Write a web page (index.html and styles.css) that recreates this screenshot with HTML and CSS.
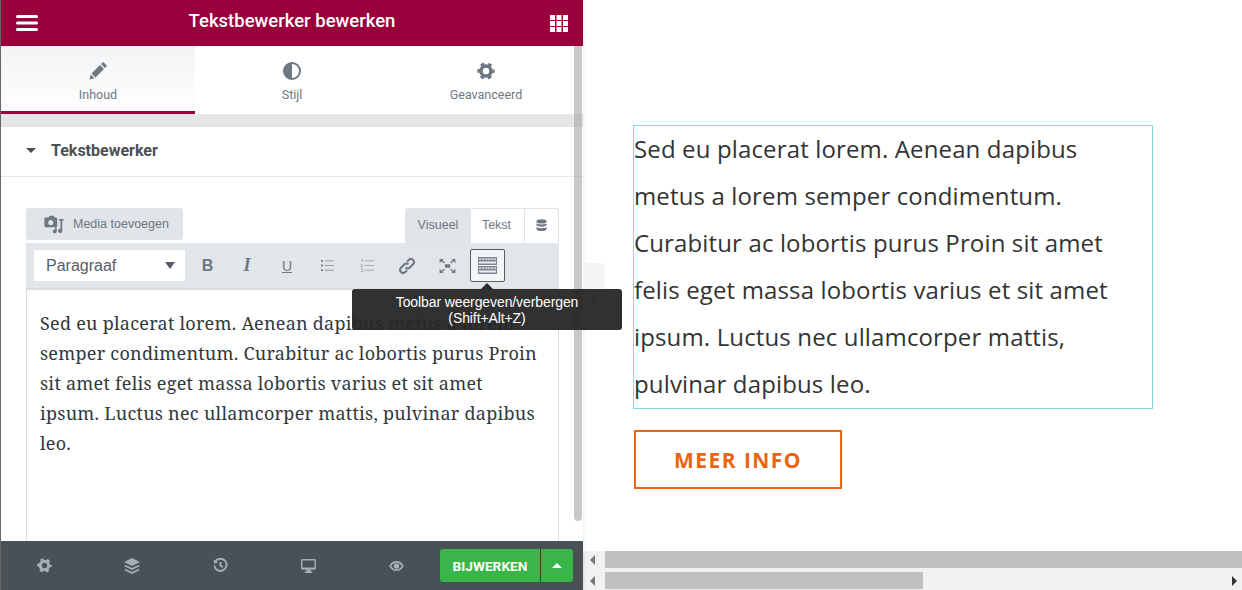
FILE: index.html
```html
<!DOCTYPE html>
<html lang="nl">
<head>
<meta charset="utf-8">
<title>Tekstbewerker bewerken</title>
<link rel="stylesheet" href="styles.css">
</head>
<body>
<div class="app">
  <aside class="panel">
    <header class="head">
      <svg class="head-icon" width="22" height="16" viewBox="0 0 22 16"><path d="M1.500 1.500h19M1.500 8h19M1.500 14.500h19" stroke="#fff" stroke-width="3" stroke-linecap="round"/></svg>
      <h1 class="head-title">Tekstbewerker bewerken</h1>
      <svg class="head-icon" width="18" height="17" viewBox="0 0 18 17" fill="#fff"><rect width="5" height="5"/><rect x="6.500" width="5" height="5"/><rect x="13" width="5" height="5"/><rect y="6" width="5" height="5"/><rect x="6.500" y="6" width="5" height="5"/><rect x="13" y="6" width="5" height="5"/><rect y="12" width="5" height="5"/><rect x="6.500" y="12" width="5" height="5"/><rect x="13" y="12" width="5" height="5"/></svg>
    </header>
    <nav class="tabs">
      <div class="tab tab-active">
        <svg width="18" height="18" viewBox="0 0 18 18" fill="#6d7882"><path d="M13.500 .5a1 1 0 0 1 1.300 0l2.700 2.700a1 1 0 0 1 0 1.300L16 6 12 2zM11 3l4 4-8.500 8.500-4-4zM1.800 12.500l3.700 3.700L.5 17.500z"/></svg>
        <span>Inhoud</span>
      </div>
      <div class="tab">
        <svg width="18" height="18" viewBox="0 0 18 18"><circle cx="9" cy="9" r="8" fill="none" stroke="#6d7882" stroke-width="2"/><path d="M9 1a8 8 0 0 0 0 16z" fill="#6d7882"/></svg>
        <span>Stijl</span>
      </div>
      <div class="tab">
        <svg width="18" height="18" viewBox="0 0 18 18"><circle cx="9" cy="9" r="5" fill="none" stroke="#6d7882" stroke-width="3.600"/><circle cx="9" cy="9" r="7.400" fill="none" stroke="#6d7882" stroke-width="2.600" stroke-dasharray="3.800 3.950" stroke-dashoffset="1.900"/></svg>
        <span>Geavanceerd</span>
      </div>
    </nav>
    <div class="band"></div>
    <div class="section">
      <span class="caret"></span>
      <h2 class="section-title">Tekstbewerker</h2>
    </div>
    <div class="editor-area">
      <div class="editor-top">
        <button class="media-btn">
          <svg width="22" height="22" viewBox="0 0 24 24" fill="#6d7882"><path d="M3 5h3l1.500-2h4L13 5h1a1.500 1.500 0 0 1 1.500 1.500V14a1.500 1.500 0 0 1-1.500 1.500H3A1.500 1.500 0 0 1 1.500 14V6.500A1.500 1.500 0 0 1 3 5zm5.500 2.600a2.800 2.800 0 1 0 0 5.600 2.800 2.800 0 0 0 0-5.600z"/><path d="M17.500 6.500h5v1.800h-1.500v11.200a2.300 2.300 0 1 1-2-2.200V8.300h-1.500zM13 15.800h2v4.200a2.200 2.200 0 1 1-2-2.100z"/></svg>
          <span>Media toevoegen</span>
        </button>
        <div class="modes">
          <span class="mode mode-on">Visueel</span>
          <span class="mode mode-text">Tekst</span>
          <span class="mode mode-icon">
            <svg width="11" height="13" viewBox="0 0 12 14" fill="#6d7882"><ellipse cx="6" cy="2.500" rx="5.500" ry="2.300"/><path d="M.5 4.500C2 6.200 10 6.200 11.500 4.500v2.300c-1 2-10 2-11 0zM.5 8.700c1.500 1.700 9.500 1.700 11 0V11c-1 2.700-10 2.700-11 0z"/></svg>
          </span>
        </div>
      </div>
      <div class="editor">
        <div class="toolbar">
          <div class="format">
            <span>Paragraaf</span>
            <i class="format-caret"></i>
          </div>
          <span class="tool tool-b">B</span>
          <span class="tool tool-i">I</span>
          <span class="tool tool-u">U</span>
          <span class="tool">
            <svg width="15" height="13" viewBox="0 0 16 14"><path d="M5 2h10M5 7h10M5 12h10" stroke="#8d96a0"/><path d="M1 1h2v2H1zM1 6h2v2H1zM1 11h2v2H1z" fill="#6d7882"/></svg>
          </span>
          <span class="tool">
            <svg width="15" height="13" viewBox="0 0 16 14"><path d="M5 2h10M5 7h10M5 12h10" stroke="#a0a8b0"/><path d="M1 1h1.500v2.500M.8 6h2L.8 8.500h2.200M.8 10.500h2v3H.8" fill="none" stroke="#8d96a0" stroke-width=".7"/></svg>
          </span>
          <span class="tool">
            <svg width="18" height="18" viewBox="0 0 18 18" fill="none" stroke="#6d7882" stroke-width="2"><path d="M7.500 10.500a3 3 0 0 0 4.300 0l3.200-3.200a3 3 0 0 0-4.300-4.300L9 4.700"/><path d="M10.500 7.500a3 3 0 0 0-4.300 0L3 10.700A3 3 0 0 0 7.300 15L9 13.300"/></svg>
          </span>
          <span class="tool">
            <svg width="17" height="14" viewBox="0 0 18 16" fill="#6d7882"><rect x="6" y="6" width="6" height="4"/><path d="M0 0h4.500L3.200 1.300 6 3.800 4.800 5 2.200 2.600 0 4.800zM18 0h-4.500l1.300 1.300L12 3.800 13.200 5l2.600-2.400L18 4.800zM0 16h4.500l-1.300-1.300L6 12.200 4.800 11l-2.600 2.400L0 11.200zM18 16h-4.500l1.300-1.300-2.800-2.500 1.200-1.200 2.600 2.400 2.200-2.200z"/></svg>
          </span>
          <span class="tool tool-kb">
            <svg width="19" height="17" viewBox="0 0 19 17"><path d="M0 0h19v8H0zM0 9h19v8H0z" fill="#7c8690"/><path d="M1 1.500h17v1.200H1zM1 4.500h17v2H1zM1 10.500h17v1.200H1zM1 13.500h17v2H1z" fill="#eceef0"/><path d="M3 1.500h1v1.200H3zM6 1.500h1v1.200H6zM9 1.500h1v1.200H9zM12 1.500h1v1.200h-1zM15 1.500h1v1.200h-1zM3 10.500h1v1.200H3zM6 10.500h1v1.200H6zM9 10.500h1v1.200H9zM12 10.500h1v1.200h-1zM15 10.500h1v1.200h-1z" fill="#7c8690"/></svg>
          </span>
        </div>
        <p class="editor-text">Sed eu placerat lorem. Aenean dapibus metus a lorem semper condimentum. Curabitur ac lobortis purus Proin sit amet felis eget massa lobortis varius et sit amet ipsum. Luctus nec ullamcorper mattis, pulvinar dapibus leo.</p>
      </div>
      <div class="scrollbar"></div>
      <div class="tooltip">Toolbar weergeven/verbergen<br>(Shift+Alt+Z)</div>
    </div>
    <footer class="foot">
      <span class="foot-cell"><svg width="15" height="15" viewBox="0 0 18 18"><circle cx="9" cy="9" r="5" fill="none" stroke="#a4afb7" stroke-width="3.600"/><circle cx="9" cy="9" r="7.400" fill="none" stroke="#a4afb7" stroke-width="2.600" stroke-dasharray="3.800 3.950" stroke-dashoffset="1.900"/></svg></span>
      <span class="foot-cell"><svg width="16" height="16" viewBox="0 0 16 16" fill="#a4afb7"><path d="M8 0l8 4-8 4-8-4z"/><path d="M1.800 6.900L8 10l6.200-3.100L16 7.900l-8 4-8-4z"/><path d="M1.800 10.900L8 14l6.200-3.100 1.800 1-8 4-8-4z"/></svg></span>
      <span class="foot-cell"><svg width="15" height="15" viewBox="0 0 16 16" fill="none" stroke="#a4afb7" stroke-width="2"><path d="M2.600 3.600A6.500 6.500 0 1 1 1.500 8"/><path d="M8 4.200V8.300l2.500 1.500"/><path d="M0.500 1.500L1.200 5.800 5.500 5z" fill="#a4afb7" stroke="none"/></svg></span>
      <span class="foot-cell"><svg width="15" height="14" viewBox="0 0 16 15" fill="#a4afb7"><path d="M1.500 0h13A1.500 1.500 0 0 1 16 1.500v8.500a1.500 1.500 0 0 1-1.500 1.500h-13A1.500 1.500 0 0 1 0 10V1.500A1.500 1.500 0 0 1 1.500 0zm0 1.500V9h13V1.500z"/><path d="M6 11h4l.5 2.500h1.500V15H4v-1.500h1.500z"/></svg></span>
      <span class="foot-cell"><svg width="15" height="10" viewBox="0 0 16 11" fill="#a4afb7"><path d="M8 0c3.500 0 6.500 2 8 5.500C14.500 9 11.500 11 8 11S1.500 9 0 5.500C1.500 2 4.500 0 8 0zm0 1.800c-2.400 0-4.500 1.400-5.800 3.700 1.300 2.300 3.400 3.700 5.800 3.700s4.500-1.400 5.800-3.700C12.500 3.200 10.400 1.800 8 1.800z"/><circle cx="8" cy="5.500" r="3"/></svg></span>
      <div class="publish">
        <span class="publish-main">BIJWERKEN</span>
        <span class="publish-more"><i class="up"></i></span>
      </div>
    </footer>
  </aside>
  <main class="preview">
    <div class="handle"><svg width="6" height="10" viewBox="0 0 6 10" fill="none" stroke="#6d7882" stroke-width="1.500"><path d="M5 1L1 5l4 4"/></svg></div>
    <div class="canvas">
      <div class="text-box"><div class="text-inner">Sed eu placerat lorem. Aenean dapibus metus a lorem semper condimentum. Curabitur ac lobortis purus Proin sit amet felis eget massa lobortis varius et sit amet ipsum. Luctus nec ullamcorper mattis, pulvinar dapibus leo.</div></div>
      <a class="cta">MEER INFO</a>
    </div>
    <div class="hscroll">
      <div class="track"><i class="arrow-l"></i><b class="thumb thumb-full"></b></div>
      <div class="track"><i class="arrow-l"></i><b class="thumb thumb-part"></b><i class="arrow-r"></i></div>
    </div>
  </main>
</div>
</body>
</html>
```
FILE: styles.css
```css
* { box-sizing: border-box; }
html, body { margin: 0; height: 590px; overflow: hidden; background: #fff; }
.app { display: flex; height: 590px; }

.panel {
  position: relative;
  width: 583px;
  flex: none;
  display: flex;
  flex-direction: column;
  background: #fff;
  border-left: 1px solid #666;
  font-family: Roboto, sans-serif;
  box-shadow: 1px 0 3px rgba(0,0,0,.08);
  z-index: 2;
}
.head {
  height: 46px;
  flex: none;
  background: #99003c;
  display: flex;
  align-items: center;
  justify-content: space-between;
  padding: 0 15px;
}
.head-title { margin: 0; padding: 0 4px 5px 0; color: #fff; font-size: 18.500px; font-weight: 500; }
.head-icon { flex: none; }

.tabs { height: 68px; flex: none; display: flex; }
.tab {
  width: 194px;
  display: flex;
  flex-direction: column;
  align-items: center;
  padding-top: 16px;
  gap: 7px;
  font-size: 12.500px;
  color: #6d7882;
}
.tab-active { background: linear-gradient(#f1f3f5, #fff); border-bottom: 3px solid #99003c; }
.band { height: 13px; flex: none; background: #e4e6e8; }
.section {
  height: 50px;
  flex: none;
  display: flex;
  align-items: center;
  padding: 0 0 3px 25px;
  border-bottom: 1px solid #e6e9ec;
}
.caret { width: 0; height: 0; border: 5px solid transparent; border-top-color: #495157; border-bottom: 0; margin-right: 15px; }
.section-title { margin: 0; font-size: 16px; font-weight: 700; color: #495157; }

.editor-area { flex: 1; min-height: 0; padding: 31px 24px 0 25px; overflow: hidden; }
.editor-top { display: flex; justify-content: space-between; align-items: flex-start; height: 35px; }
.media-btn {
  width: 157px;
  height: 32px;
  display: flex;
  align-items: center;
  gap: 8px;
  padding: 0 0 0 17px;
  border: 0;
  border-radius: 3px;
  background: #e1e4e8;
  color: #6d7882;
  font: 12.500px "Liberation Sans", sans-serif;
}
.modes { display: flex; height: 35px; border: 1px solid #e1e4e8; border-bottom: 0; border-radius: 3px 3px 0 0; font: 12.500px "Liberation Sans", sans-serif; color: #6d7882; }
.mode { display: flex; align-items: center; justify-content: center; width: 54px; padding-bottom: 2px; border-left: 1px solid #e1e4e8; }
.mode-on { width: 64px; background: #e1e4e8; border-left: 0; }
.mode-text { padding-right: 2px; }
.mode-icon { width: 34px; }

.editor { height: 300px; border: 1px solid #ddd; border-top: 0; }
.toolbar {
  height: 47px;
  display: flex;
  align-items: center;
  padding-left: 8px;
  background: #e2e5e9;
  border-bottom: 2px solid #d8dbdf;
  margin: 0 -1px;
}
.format {
  width: 151px;
  height: 31px;
  display: flex;
  align-items: center;
  justify-content: space-between;
  padding: 0 10px 0 12px;
  background: #fff;
  font: 16px "Liberation Sans", sans-serif;
  color: #555d66;
  margin-right: 3px;
}
.format-caret { width: 0; height: 0; border: 5.500px solid transparent; border-top: 7px solid #555d66; border-bottom: 0; }
.tool {
  width: 40px;
  height: 33px;
  display: flex;
  align-items: center;
  justify-content: center;
  color: #6d7882;
  font: 700 16px "Liberation Sans", sans-serif;
}
.tool-b { width: 39px; }
.tool-i { font-family: "Liberation Serif", serif; font-style: italic; font-size: 18px; }
.tool-u { text-decoration: underline; font-weight: 400; font-size: 14px; }
.tool-kb { width: 35px; margin-left: 3px; background: #f4f5f6; border: 1px solid #555d66; border-radius: 2px; }
.editor-text {
  margin: 0;
  padding: 18px 14px 0 13px;
  font: 18px/30px "Noto Serif", "DejaVu Serif", serif;
  letter-spacing: .25px;
  color: #32373c;
}
.scrollbar {
  position: absolute;
  left: 573px;
  top: 46px;
  width: 8px;
  height: 475px;
  background: rgba(170,170,170,.65);
  border-radius: 0 0 4px 4px;
}
.tooltip {
  position: absolute;
  left: 351px;
  top: 289px;
  width: 270px;
  height: 41px;
  padding-top: 5px;
  background: rgba(38,38,38,.95);
  border-radius: 3px;
  color: #fff;
  font: 14px/16px "Liberation Sans", sans-serif;
  letter-spacing: -.1px;
  text-align: center;
}
.tooltip::before {
  content: "";
  position: absolute;
  left: 129px;
  top: -6px;
  border: 6px solid transparent;
  border-bottom-color: #2d2d2d;
  border-top: 0;
}
.foot {
  height: 49px;
  flex: none;
  display: flex;
  align-items: center;
  padding-right: 10px;
  background: #495157;
}
.foot-cell { width: 88px; flex: none; display: flex; justify-content: center; }
.foot-cell:first-child { margin-left: -1px; }
.publish { display: flex; height: 33px; width: 133px; margin-left: auto; border-radius: 3px; background: #39b54a; color: #fff; font-weight: 700; font-size: 13.700px; }
.publish-main { width: 101px; display: flex; align-items: center; justify-content: center; border-right: 1px solid #33423a; }
.publish-more { flex: 1; display: flex; align-items: center; justify-content: center; }
.up { width: 0; height: 0; border: 5px solid transparent; border-bottom-color: #fff; border-top: 0; }

.preview { flex: 1; min-width: 0; position: relative; display: flex; flex-direction: column; }
.handle {
  position: absolute;
  left: 2px;
  top: 263px;
  width: 20px;
  height: 66px;
  background: #f3f4f5;
  border-radius: 0 3px 3px 0;
  padding: 26px 0 0 6px;
}
.canvas { flex: 1; min-height: 0; padding: 125px 0 0 50px; font-family: "Open Sans", sans-serif; }
.text-box {
  width: 520px;
  height: 284px;
  padding-right: 20px;
  border: 1px solid #7fdde4;
  font-size: 24px;
  line-height: 47px;
  letter-spacing: .14px;
  color: #333;
}
.text-inner { margin-top: -1px; }
.cta {
  display: flex;
  align-items: center;
  justify-content: center;
  width: 208px;
  height: 59px;
  margin: 21px 0 0 1px;
  border: 2px solid #ec6410;
  color: #ec6410;
  font-size: 21px;
  font-weight: 700;
  letter-spacing: 1.450px;
}
.hscroll { height: 40px; flex: none; display: flex; flex-direction: column; gap: 4px; padding-top: 1px; background: linear-gradient(#fff 1px, #f1f1f1 1px); }
.track { height: 17px; position: relative; display: flex; padding-left: 22px; }
.thumb { display: block; background: #c0c0c0; height: 17px; }
.thumb-full { flex: 1; }
.thumb-part { width: 318px; }
.arrow-l, .arrow-r { position: absolute; top: 4px; width: 0; height: 0; border: 5px solid transparent; }
.arrow-l { left: 7px; border-right-color: #777; border-left: 0; }
.arrow-r { right: 5px; border-left-color: #333; border-right: 0; }
```
